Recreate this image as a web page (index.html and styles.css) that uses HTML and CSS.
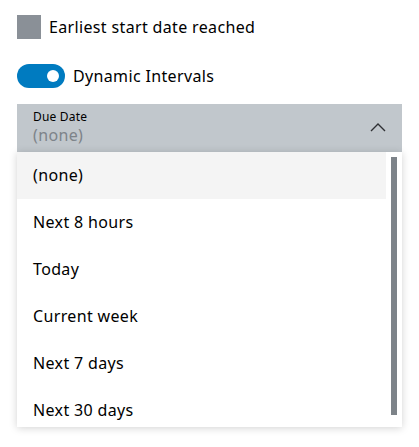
FILE: index.html
```html
<!DOCTYPE html>
<html>
<head>
<meta charset="utf-8">
<link rel="stylesheet" href="styles.css">
</head>
<body>
<div class="page">
  <div class="check-row">
    <span class="checkbox"></span>
    <span class="label">Earliest start date reached</span>
  </div>
  <div class="toggle-row">
    <span class="toggle"><span class="knob"></span></span>
    <span class="label">Dynamic Intervals</span>
  </div>
  <div class="select-wrap">
    <div class="select">
      <div class="select-text">
        <div class="select-label">Due Date</div>
        <div class="select-value">(none)</div>
      </div>
      <svg class="chevron" width="16" height="10" viewBox="0 0 16 10"><path d="M1 9 L8 2 L15 9" fill="none" stroke="#2e3033" stroke-width="1.4"/></svg>
    </div>
    <div class="dropdown">
      <ul class="options">
        <li class="option active">(none)</li>
        <li class="option">Next 8 hours</li>
        <li class="option">Today</li>
        <li class="option">Current week</li>
        <li class="option">Next 7 days</li>
        <li class="option">Next 30 days</li>
      </ul>
      <div class="scrollbar"><div class="thumb"></div></div>
    </div>
  </div>
</div>
</body>
</html>
```

FILE: styles.css
```css
html, body {
  margin: 0;
  padding: 0;
  background: #ffffff;
}
body {
  font-family: "Noto Sans", "Open Sans", sans-serif;
  color: #000000;
  font-size: 16px;
  letter-spacing: 0.35px;
}
.page {
  padding: 15px 17px 20px 17px;
}
.check-row {
  display: flex;
  align-items: center;
  gap: 8px;
  height: 24px;
}
.checkbox {
  width: 24px;
  height: 24px;
  background: #8a9097;
  flex: none;
}
.label {
  font-size: 16px;
  line-height: 24px;
}
.toggle-row {
  display: flex;
  align-items: center;
  gap: 8px;
  height: 24px;
  margin-top: 25px;
}
.toggle {
  width: 48px;
  height: 24px;
  border-radius: 12px;
  background: #007bc0;
  flex: none;
  display: flex;
  align-items: center;
  justify-content: flex-end;
  padding-right: 6px;
  box-sizing: border-box;
}
.knob {
  width: 12px;
  height: 12px;
  border-radius: 50%;
  background: #ffffff;
}
.select-wrap {
  margin-top: 16px;
  width: 385px;
}
.select {
  height: 48px;
  background: #c1c7cc;
  display: flex;
  align-items: center;
  justify-content: space-between;
  padding: 0 16px;
  box-sizing: border-box;
}
.select-text {
  display: flex;
  flex-direction: column;
  margin-top: -3px;
}
.select-label {
  font-size: 12px;
  line-height: 16px;
  letter-spacing: 0.2px;
}
.select-value {
  font-size: 16px;
  line-height: 20px;
  color: #7d8389;
}
.chevron {
  margin-top: -2px;
}
.dropdown {
  position: relative;
  width: 385px;
  height: 275px;
  background: #ffffff;
  box-shadow: 0 1px 8px rgba(0, 0, 0, 0.18);
  overflow: hidden;
  display: flex;
}
.options {
  list-style: none;
  margin: 0;
  padding: 0;
  width: 369px;
  flex: none;
}
.option {
  height: 47px;
  line-height: 47px;
  padding-left: 16px;
  font-size: 16px;
}
.option.active {
  background: #f4f4f4;
}
.scrollbar {
  padding: 5px 0 0 5px;
}
.thumb {
  width: 6px;
  height: 258px;
  background: #7d8389;
}
```
